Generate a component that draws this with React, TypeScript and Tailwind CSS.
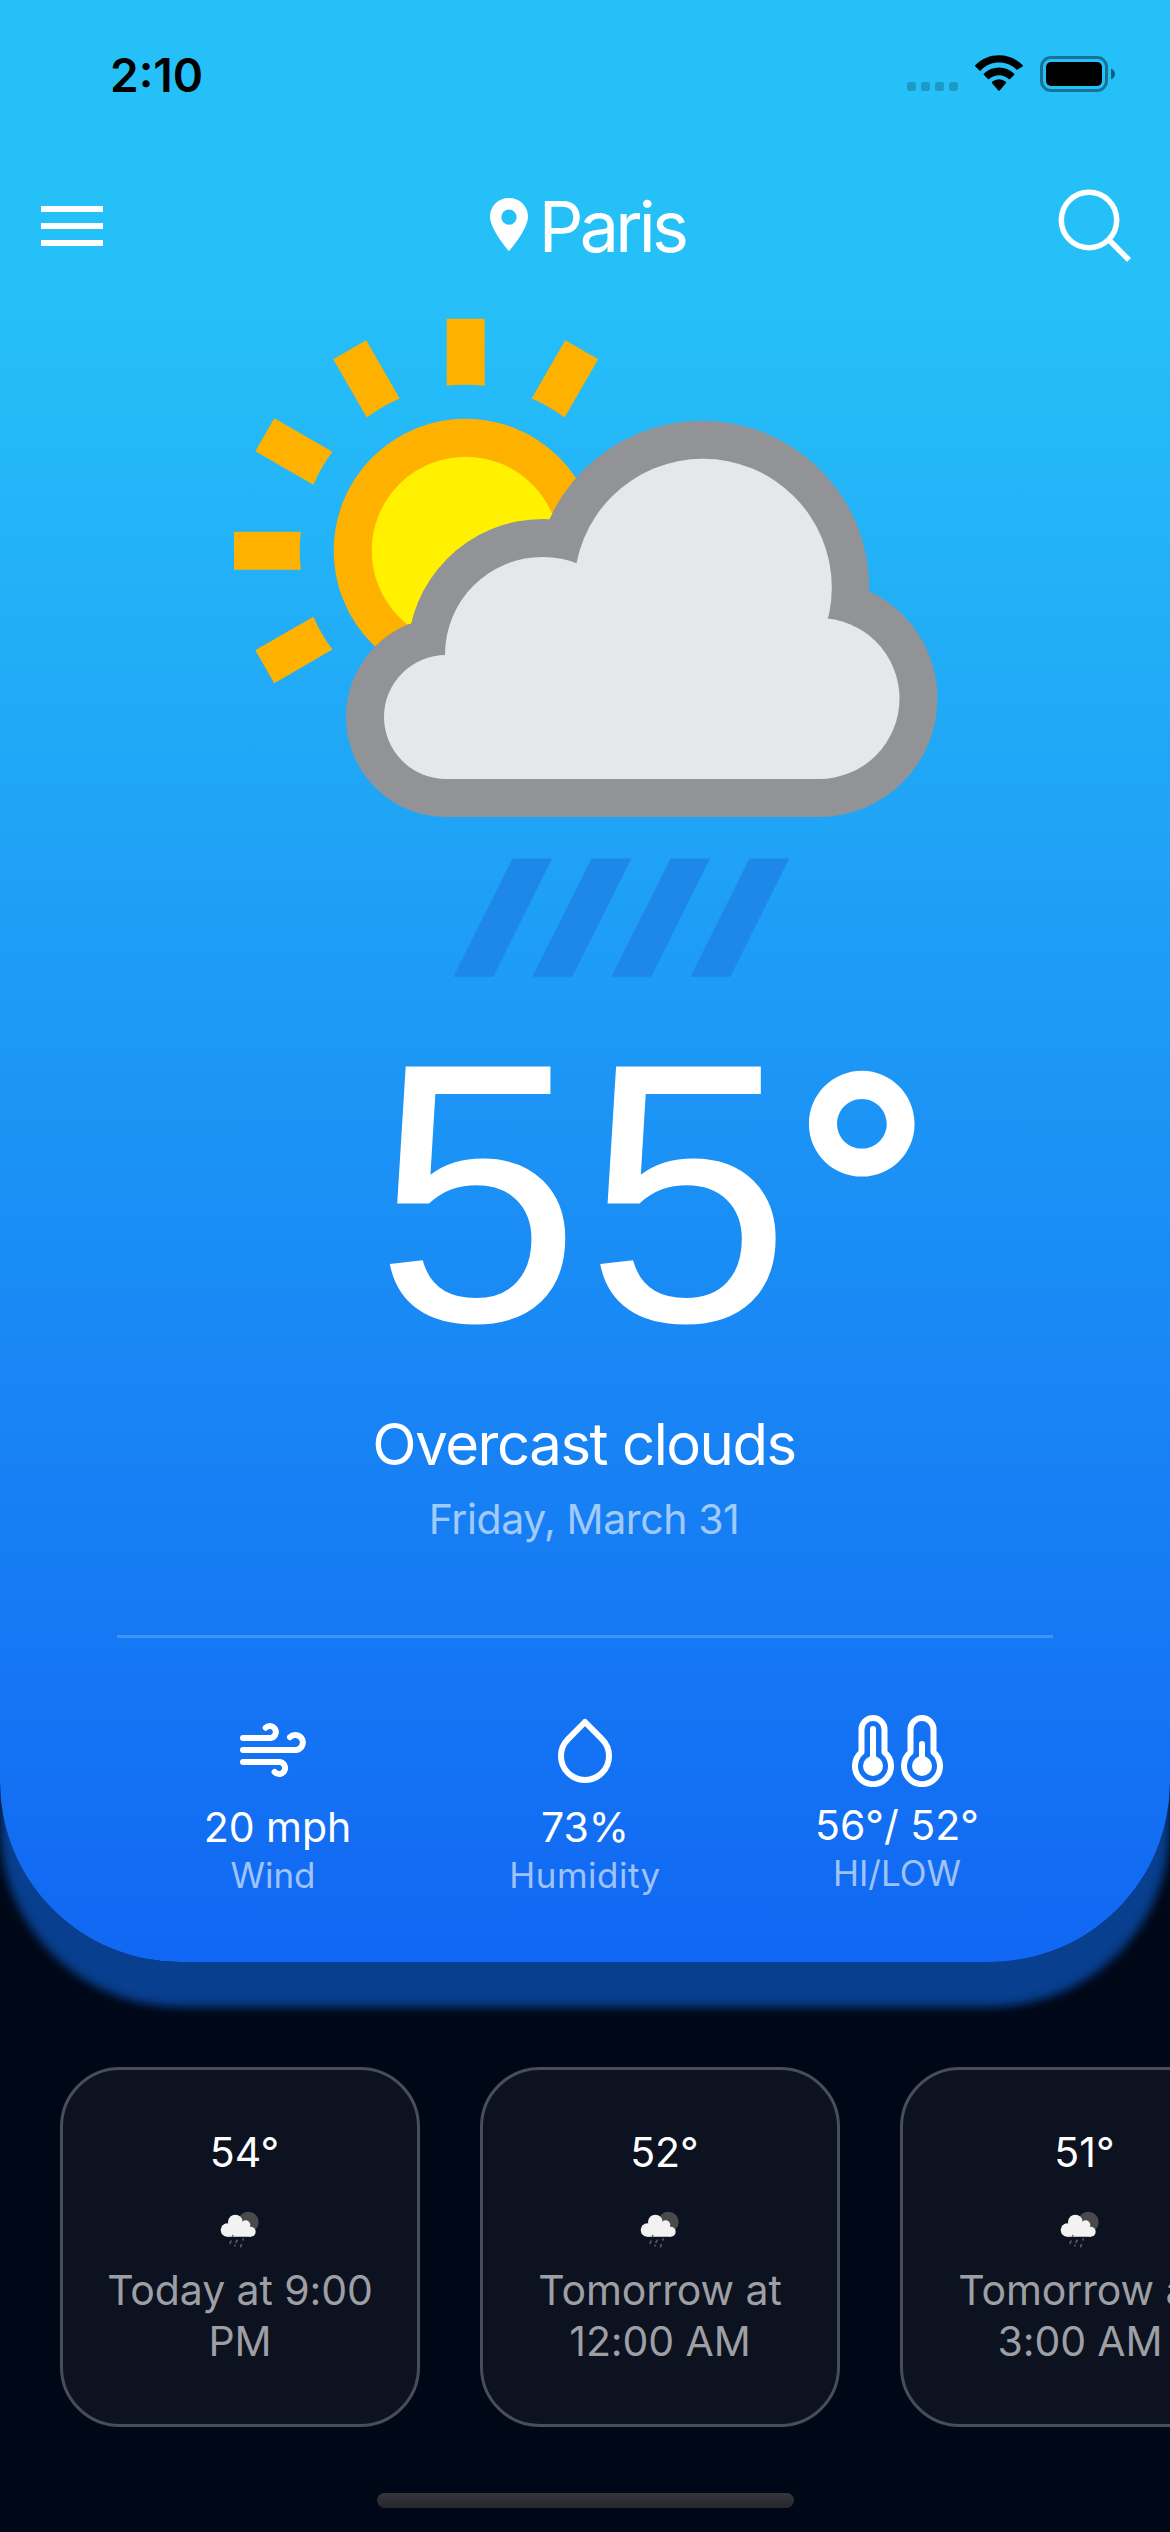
import type { ReactNode } from "react";

function StatusBar() {
  return (
    <div className="flex h-[147px] items-center justify-between pl-[110px] pr-[54px] text-black">
      <span className="mt-[2px] text-[46px] font-semibold leading-none">2:10</span>
      <div className="flex items-center gap-[17px]">
        <svg width="51" height="37" viewBox="0 0 51 37" fill="#000" fillOpacity="0.2">
          <rect x="0" y="27" width="9" height="9" rx="2.5" />
          <rect x="14" y="27" width="9" height="9" rx="2.5" />
          <rect x="28" y="27" width="9" height="9" rx="2.5" />
          <rect x="42" y="27" width="9" height="9" rx="2.5" />
        </svg>
        <svg width="48" height="37" viewBox="0 0 48 37" fill="#000">
          <path d="M24 7.6c6.7 0 12.8 2.6 17.300 6.900a0.900 0.900 0 0 0 1.250 0L47.600 11.400a1 1 0 0 0 0-1.400C34.400-3 13.600-3 0.400 10a1 1 0 0 0 0 1.400L4.500 15.500a0.900 0.900 0 0 0 1.250 0C10.600 10.200 17.300 7.600 24 7.600z" />
          <path d="M24 20.300c3.700 0 7.100 1.400 9.700 3.700a1 1 0 0 0 1.350 0l4-4a1 1 0 0 0 0-1.450a21.800 21.800 0 0 0-30.100 0a1 1 0 0 0 0 1.450l4 4a1 1 0 0 0 1.350 0A14.400 14.400 0 0 1 24 20.300z" />
          <path d="M30.900 28.200a1 1 0 0 0 0-1.450a10.600 10.600 0 0 0-13.800 0a1 1 0 0 0 0 1.450l6.200 7.300a0.950 0.950 0 0 0 1.400 0z" />
        </svg>
        <svg width="76" height="37" viewBox="0 0 76 37">
          <rect x="1.500" y="2.500" width="65" height="33" rx="9.500" fill="none" stroke="#000" strokeOpacity="0.400" strokeWidth="3" />
          <rect x="6" y="7" width="56" height="24" rx="5" fill="#000" />
          <path d="M71 13.500c2.500 1 4 3 4 5.500s-1.500 4.500-4 5.500z" fill="#000" fillOpacity="0.500" />
        </svg>
      </div>
    </div>
  );
}

function NavBar() {
  return (
    <div className="grid h-[158px] grid-cols-[1fr_auto_1fr] items-center pl-[41px] pr-[38px]">
      <div className="flex w-[62px] flex-col gap-[11px]">
        <div className="h-[6px] bg-white" />
        <div className="h-[6px] bg-white" />
        <div className="h-[6px] bg-white" />
      </div>
      <div className="ml-[2px] flex items-center">
        <svg width="38" height="53" viewBox="0 0 38 53" className="mt-[-3px]">
          <path fillRule="evenodd" fill="#fff" d="M19 0C8.500 0 0 8 0 18.400C0 31.500 19 53 19 53S38 31.500 38 18.400C38 8 29.500 0 19 0zM19 11.400a7.700 7.700 0 1 1 0 15.400a7.700 7.700 0 0 1 0-15.400z" />
        </svg>
        <span className="ml-[11px] mt-[2px] text-[70px] leading-none tracking-[-3.800px] text-white">Paris</span>
      </div>
      <svg width="74" height="74" viewBox="0 0 74 74" className="justify-self-end" fill="none" stroke="#fff" strokeWidth="5.500">
        <circle cx="31" cy="31" r="27.700" />
        <path d="M51 51L71 71" />
      </svg>
    </div>
  );
}

const rayAngles = [-120, -90, -60, -30, 0, 30];
const rainDrops = [0, 79, 158, 237];

function WeatherArt() {
  return (
    <svg width="704" height="659" viewBox="234 318 704 659" className="ml-[234px] mt-[13px] shrink-0">
      {rayAngles.map((a) => (
        <path
          key={a}
          d="M-19 -232H19V-164.900A166 166 0 0 0 -19 -164.900Z"
          transform={`translate(465.700 550.700) rotate(${a})`}
          fill="#ffb100"
        />
      ))}
      <circle cx="465.700" cy="550.700" r="113" fill="#fff100" stroke="#ffb100" strokeWidth="38" />
      <g fill="#929397">
        <circle cx="702" cy="588" r="167.300" />
        <circle cx="819" cy="698.500" r="118.500" />
        <circle cx="543" cy="654.500" r="135.500" />
        <circle cx="446" cy="717" r="100" />
        <rect x="446" y="655" width="373" height="162" />
      </g>
      <g fill="#e6e7e9">
        <circle cx="703" cy="587.500" r="128.800" />
        <circle cx="819" cy="698.500" r="80.500" />
        <circle cx="542.500" cy="654.500" r="97.500" />
        <circle cx="446" cy="717" r="62" />
        <rect x="446" y="655" width="373" height="124" />
      </g>
      {rainDrops.map((x) => (
        <path key={x} d="M512.500 858.500h39.700L493.200 976.700h-39.900z" transform={`translate(${x} 0)`} fill="#1e88e8" />
      ))}
    </svg>
  );
}

function WindIcon() {
  return (
    <svg width="72" height="60" viewBox="-36 -30 72 60" fill="none" stroke="#fff" strokeWidth="6" strokeLinecap="round">
      <path d="M-30 -12H-2.500A6 6 0 1 0 -7.300 -22.300" />
      <path d="M-30 0H22.500A7.500 7.500 0 1 0 17 -12.800" />
      <path d="M-30 12H6A6 6 0 1 1 1.600 22" />
    </svg>
  );
}

function DropIcon() {
  return (
    <svg width="60" height="66" viewBox="0 0 60 66" className="mt-[2px]" fill="none" stroke="#fff" strokeWidth="6" strokeLinecap="round" strokeLinejoin="round">
      <path d="M30 4L12.800 21.300C8.500 25.600 6 31.500 6 38A24 24 0 0 0 54 38C54 31.500 51.500 25.600 47.200 21.300Z" />
    </svg>
  );
}

function Thermometer({ stem }: { stem: number }) {
  return (
    <svg width="42" height="72" viewBox="0 0 42 72" fill="none" stroke="#fff" strokeWidth="6" strokeLinecap="round">
      <path d="M9.500 37.300V14.500a11.500 11.500 0 0 1 23 0V37.300a18 18 0 1 1 -23 0z" strokeLinejoin="round" />
      <path d={`M21 51V${stem}`} />
      <circle cx="21" cy="51" r="10" fill="#fff" stroke="none" />
    </svg>
  );
}

function Stat({ icon, value, label, valueClass = "mt-[12px]", labelClass = "", className = "" }: {
  icon: ReactNode; value: string; label: string; valueClass?: string; labelClass?: string; className?: string;
}) {
  return (
    <div className={`flex flex-col items-center whitespace-nowrap ${className}`}>
      <div className="flex h-[80px] items-center">{icon}</div>
      <div className={`text-[41px] leading-[50px] text-white ${valueClass}`}>{value}</div>
      <div className={`text-[35px] leading-[46px] text-white/60 ${labelClass}`}>{label}</div>
    </div>
  );
}

function NightRainIcon() {
  return (
    <svg width="40" height="38" viewBox="541 514 120 114" className="mt-[34px] shrink-0">
      <circle cx="626" cy="547" r="31" fill="#4a4a4a" />
      <g fill="#f2f2f2">
        <circle cx="587" cy="547" r="22" />
        <circle cx="563" cy="571" r="20" />
        <circle cx="618" cy="556" r="14" />
        <circle cx="633" cy="576" r="15" />
        <path d="M563 555h60l10 16v20h-70z" />
      </g>
      <g stroke="#5a5b5e" strokeWidth="5" strokeLinecap="round">
        <path d="M579 588v1M574 604l-3 7M592 602l-3 6M611 598l-1 3M586 617v1M605 615l-2 6" />
      </g>
    </svg>
  );
}

function HourCard({ temp, lines }: { temp: string; lines: [string, string] }) {
  return (
    <div className="flex h-[360px] w-[360px] shrink-0 flex-col items-center rounded-[60px] border-[3px] border-[#484d59] bg-[#0c121f] pt-[57px]">
      <div className="ml-[9px] text-[41px] leading-[50px] text-white">{temp}</div>
      <NightRainIcon />
      <div className="mt-[16px] whitespace-nowrap text-center text-[41px] leading-[51px] tracking-[-0.100px] text-[#9d9fa5]">
        <div>{lines[0]}</div>
        <div>{lines[1]}</div>
      </div>
    </div>
  );
}

export default function App() {
  return (
    <div className="h-[2532px] w-[1170px] overflow-hidden bg-[#000817] font-['Inter',sans-serif]">
      <div className="flex h-[1962px] flex-col rounded-b-[180px] bg-[linear-gradient(180deg,#26c0f8_0px,#26c0f8_290px,#1167f3_1962px)] shadow-[0_45px_10px_#083f8f]">
        <StatusBar />
        <NavBar />
        <WeatherArt />
        <div className="flex h-[432px] pl-[375px] leading-[432px] text-white">
          <span className="font-['Liberation_Sans',sans-serif] text-[370px] tracking-[4.600px]">55</span>
          <span className="ml-[-5px] mt-[-7px] text-[310px] font-[580]">°</span>
        </div>
        <div className="mr-[2px] text-center text-[58px] leading-[70px] tracking-[-1.450px] text-white">Overcast clouds</div>
        <div className="mr-[2px] text-center text-[41px] leading-[80px] tracking-[-0.400px] text-white/60">Friday, March 31</div>
        <div className="mx-[117px] mt-[76px] h-[3px] bg-white/20" />
        <div className="mx-[117px] mt-[72px] grid grid-cols-3">
          <Stat icon={<WindIcon />} value="20 mph" label="Wind" valueClass="ml-[9px] mt-[12px]" />
          <Stat icon={<DropIcon />} value="73%" label="Humidity" labelClass="tracking-[0.500px]" />
          <Stat
            icon={<div className="flex gap-[7px]"><Thermometer stem={14} /><Thermometer stem={29} /></div>}
            value="56°/ 52°"
            label="HI/LOW"
            valueClass="mt-[9px]"
            className="mt-px"
          />
        </div>
      </div>
      <div className="mt-[105px] flex gap-[60px] overflow-hidden pl-[60px]">
        <HourCard temp="54°" lines={["Today at 9:00", "PM"]} />
        <HourCard temp="52°" lines={["Tomorrow at", "12:00 AM"]} />
        <HourCard temp="51°" lines={["Tomorrow at", "3:00 AM"]} />
      </div>
      <div className="ml-[377px] mt-[66px] h-[15px] w-[417px] rounded-full bg-linear-to-b from-[#35373c] to-[#25272d]" />
    </div>
  );
}
